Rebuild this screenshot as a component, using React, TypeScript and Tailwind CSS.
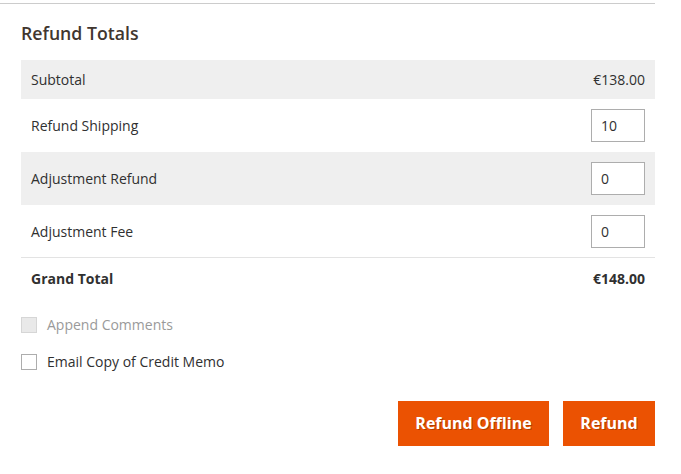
import React from "react";

function Num({ value }: { value: string }) {
  return (
    <input
      defaultValue={value}
      className="h-[33px] w-[54px] border border-[#adadad] bg-white px-[9px] text-[14px] text-[#303030] outline-none"
    />
  );
}

export default function App() {
  return (
    <div className="w-[681px] h-[474px] bg-white font-['Open_Sans',sans-serif] text-[14px] text-[#303030]">
      <div className="pt-[3px] w-[655px]">
        <div className="border-t border-[#cccccc]" />
      </div>
      <div className="ml-[21px] w-[634px]">
        <h2 className="mt-[17px] mb-[15px] text-[17.7px] leading-[24px] font-semibold text-[#41362f]">Refund Totals</h2>
        <div className="flex flex-col">
          <div className="h-[39px] flex items-center justify-between px-[10px] bg-[#efefef]">
            <span>Subtotal</span>
            <span>€138.00</span>
          </div>
          <div className="h-[53px] flex items-center justify-between px-[10px]">
            <span>Refund Shipping</span>
            <Num value="10" />
          </div>
          <div className="h-[53px] flex items-center justify-between px-[10px] bg-[#efefef]">
            <span>Adjustment Refund</span>
            <Num value="0" />
          </div>
          <div className="h-[53px] flex items-center justify-between px-[10px] border-b border-[#e3e3e3]">
            <span>Adjustment Fee</span>
            <Num value="0" />
          </div>
          <div className="h-[40px] flex items-center justify-between px-[10px] font-bold">
            <span>Grand Total</span>
            <span>€148.00</span>
          </div>
        </div>
        <div className="mt-[19px] flex flex-col gap-[21px]">
          <label className="flex items-center gap-[10px] text-[#9a9a9a]">
            <span className="h-[16px] w-[16px] border border-[#d6d6d6] bg-[#e9e9e9]" />
            <span className="leading-[16px]">Append Comments</span>
          </label>
          <label className="flex items-center gap-[10px]">
            <span className="h-[16px] w-[16px] border border-[#adadad] bg-white" />
            <span className="leading-[16px]">Email Copy of Credit Memo</span>
          </label>
        </div>
        <div className="mt-[31px] flex justify-end gap-[14px]">
          <button className="h-[45px] w-[151px] pb-[2px] bg-[#eb5202] text-[16px] font-bold text-white [text-shadow:1px_1px_0_rgba(0,0,0,0.25)]">
            Refund Offline
          </button>
          <button className="h-[45px] w-[92px] pb-[2px] bg-[#eb5202] text-[16px] font-bold text-white [text-shadow:1px_1px_0_rgba(0,0,0,0.25)]">
            Refund
          </button>
        </div>
      </div>
    </div>
  );
}
